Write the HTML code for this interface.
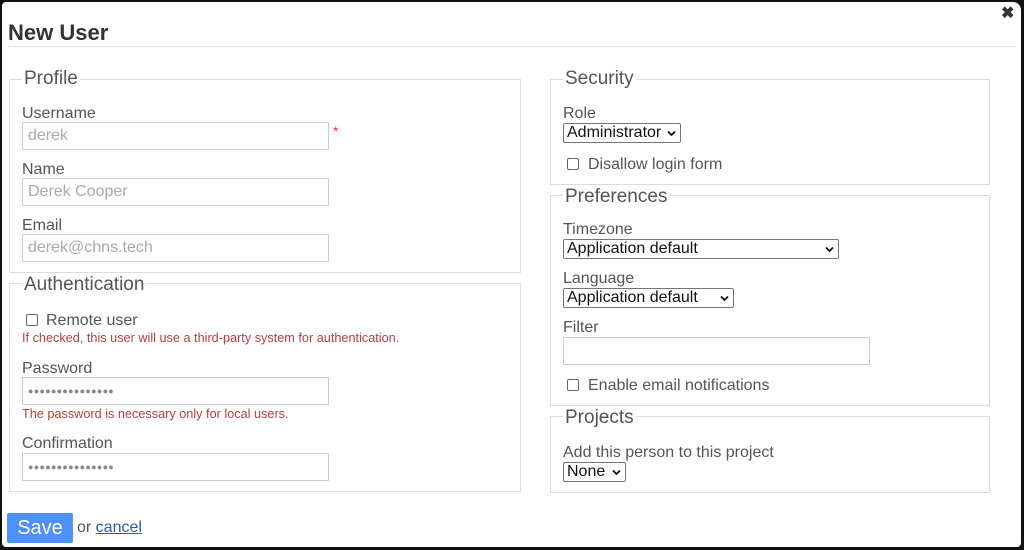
<!DOCTYPE html>
<html><head><meta charset="utf-8"><style>
*{box-sizing:border-box;margin:0;padding:0}
body{width:1024px;height:550px;background:#111;font-family:"Liberation Sans",Arial,sans-serif;overflow:hidden;position:relative}
#dlg{position:absolute;left:2px;top:2px;width:1019px;height:545px;background:#fff;border-radius:4px 8px 4px 4px}
.a{position:absolute;white-space:nowrap}
.fs{position:absolute;border:1px solid #ddd}
.lg{position:absolute;background:#fff;font-size:19px;color:#555;padding:0 2px;line-height:20px}
.lb{font-size:16px;color:#555;line-height:17px}
.in{position:absolute;border:1px solid #ccc;height:28px;font-size:16px;color:#aaa;padding-left:5px;line-height:26px;background:#fff}
.pw{font-size:9px;color:#888;letter-spacing:0.3px}
.hint{font-size:12.7px;color:#b84040;line-height:14px}
.sel{position:absolute;border:1px solid #767676;border-radius:2px;height:20px;font-size:16px;color:#111;padding-left:3px;line-height:18px;background:#fff}
.sel svg{position:absolute;right:4px;top:6px}
.cb{position:absolute;width:12px;height:12px;border:1px solid #666;border-radius:2px;background:#fff}
</style></head><body>
<div id="dlg">
<div class="a" style="left:6px;top:18px;font-size:22px;font-weight:bold;color:#333">New User</div>
<div class="a" style="left:6px;top:44px;width:1008px;border-top:1px dotted #ccc"></div>
<div class="a" style="left:999px;top:1px;font-size:16px;font-weight:bold;color:#333">✖</div>

<!-- Profile -->
<div class="fs" style="left:7px;top:77px;width:512px;height:194px"></div>
<div class="lg" style="left:20px;top:67px">Profile</div>
<div class="a lb" style="left:20px;top:103px">Username</div>
<div class="in" style="left:20px;top:120px;width:307px">derek</div>
<div class="a" style="left:331px;top:121px;color:#e33;font-size:14px">*</div>
<div class="a lb" style="left:20px;top:159px">Name</div>
<div class="in" style="left:20px;top:176px;width:307px">Derek Cooper</div>
<div class="a lb" style="left:20px;top:215px">Email</div>
<div class="in" style="left:20px;top:232px;width:307px">derek@chns.tech</div>

<!-- Authentication -->
<div class="fs" style="left:7px;top:281px;width:512px;height:209px"></div>
<div class="lg" style="left:20px;top:273px">Authentication</div>
<div class="cb" style="left:24px;top:312px"></div>
<div class="a lb" style="left:44px;top:310px">Remote user</div>
<div class="a hint" style="left:20px;top:329px">If checked, this user will use a third-party system for authentication.</div>
<div class="a lb" style="left:20px;top:358px">Password</div>
<div class="in pw" style="left:20px;top:375px;width:307px">●●●●●●●●●●●●●●●</div>
<div class="a hint" style="left:20px;top:405px">The password is necessary only for local users.</div>
<div class="a lb" style="left:20px;top:433px">Confirmation</div>
<div class="in pw" style="left:20px;top:451px;width:307px">●●●●●●●●●●●●●●●</div>

<!-- Security -->
<div class="fs" style="left:548px;top:77px;width:440px;height:106px"></div>
<div class="lg" style="left:561px;top:67px">Security</div>
<div class="a lb" style="left:561px;top:103px">Role</div>
<div class="sel" style="left:561px;top:121px;width:118px">Administrator<svg width="9" height="7" viewBox="0 0 9 7"><path d="M1 1.5l3.5 3.5 3.5-3.5" stroke="#111" stroke-width="1.8" fill="none"/></svg></div>
<div class="cb" style="left:565px;top:156px"></div>
<div class="a lb" style="left:586px;top:154px">Disallow login form</div>

<!-- Preferences -->
<div class="fs" style="left:548px;top:193px;width:440px;height:211px"></div>
<div class="lg" style="left:561px;top:185px">Preferences</div>
<div class="a lb" style="left:561px;top:219px">Timezone</div>
<div class="sel" style="left:561px;top:237px;width:276px">Application default<svg width="9" height="7" viewBox="0 0 9 7"><path d="M1 1.5l3.5 3.5 3.5-3.5" stroke="#111" stroke-width="1.8" fill="none"/></svg></div>
<div class="a lb" style="left:561px;top:268px">Language</div>
<div class="sel" style="left:561px;top:286px;width:171px">Application default<svg width="9" height="7" viewBox="0 0 9 7"><path d="M1 1.5l3.5 3.5 3.5-3.5" stroke="#111" stroke-width="1.8" fill="none"/></svg></div>
<div class="a lb" style="left:561px;top:317px">Filter</div>
<div class="in" style="left:561px;top:335px;width:307px"></div>
<div class="cb" style="left:565px;top:377px"></div>
<div class="a lb" style="left:586px;top:375px">Enable email notifications</div>

<!-- Projects -->
<div class="fs" style="left:548px;top:414px;width:440px;height:77px"></div>
<div class="lg" style="left:561px;top:406px">Projects</div>
<div class="a lb" style="left:561px;top:442px">Add this person to this project</div>
<div class="sel" style="left:561px;top:460px;width:63px">None<svg width="9" height="7" viewBox="0 0 9 7"><path d="M1 1.5l3.5 3.5 3.5-3.5" stroke="#111" stroke-width="1.8" fill="none"/></svg></div>

<!-- buttons -->
<div class="a" style="left:5px;top:511px;width:66px;height:30px;background:#4d90fe;border-radius:2px;color:#fff;font-size:20px;line-height:30px;text-align:center">Save</div>
<div class="a" style="left:75px;top:517px;font-size:16px;color:#555">or <span style="color:#2a5db0;text-decoration:underline">cancel</span></div>
</div>
</body></html>
